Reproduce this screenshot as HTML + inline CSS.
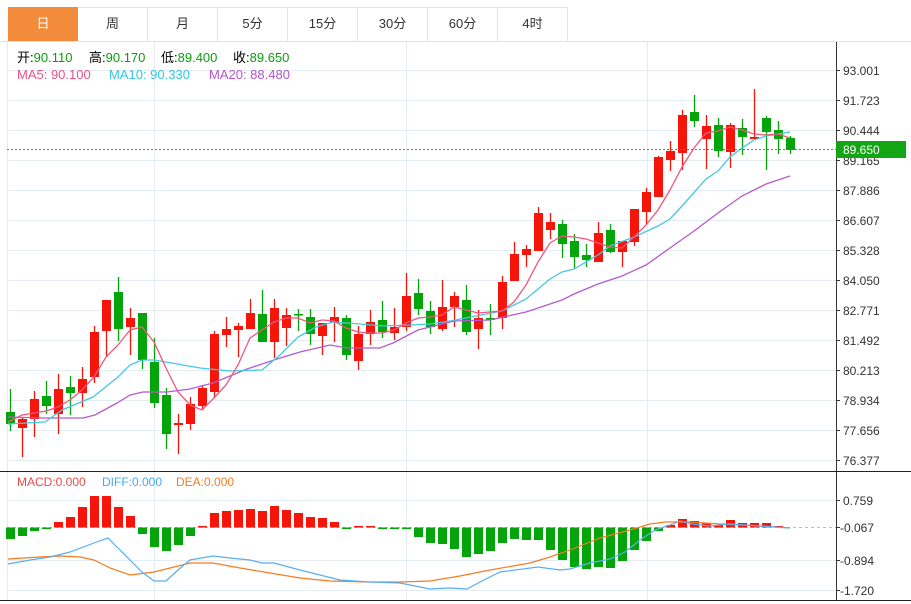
<!DOCTYPE html>
<html><head><meta charset="utf-8"><style>
html,body{margin:0;padding:0;background:#fff;width:911px;height:604px;overflow:hidden;font-family:"Liberation Sans","Noto Sans CJK SC",sans-serif;}
.tabs{position:absolute;left:8px;top:7px;height:34px;display:flex;}
.tab{width:70px;height:34px;line-height:34px;text-align:center;font-size:13px;color:#333;border-right:1px solid #e3e3e3;box-sizing:border-box;}
.tab.on{background:#f28c3c;color:#fff;border-right:none}
</style></head><body>
<svg width="911" height="604" style="position:absolute;left:0;top:0" font-family="Liberation Sans, Noto Sans CJK SC, sans-serif">
<line x1="0" y1="41.5" x2="911" y2="41.5" stroke="#e3e3e3"/>
<line x1="8" y1="7.5" x2="567" y2="7.5" stroke="#e3e3e3"/>
<g stroke="#e4ecf3" stroke-width="1">
<line x1="7" y1="70.5" x2="836" y2="70.5"/><line x1="7" y1="100.5" x2="836" y2="100.5"/><line x1="7" y1="130.5" x2="836" y2="130.5"/><line x1="7" y1="160.5" x2="836" y2="160.5"/><line x1="7" y1="190.5" x2="836" y2="190.5"/><line x1="7" y1="220.5" x2="836" y2="220.5"/><line x1="7" y1="250.5" x2="836" y2="250.5"/><line x1="7" y1="280.5" x2="836" y2="280.5"/><line x1="7" y1="310.5" x2="836" y2="310.5"/><line x1="7" y1="340.5" x2="836" y2="340.5"/><line x1="7" y1="370.5" x2="836" y2="370.5"/><line x1="7" y1="400.5" x2="836" y2="400.5"/><line x1="7" y1="430.5" x2="836" y2="430.5"/><line x1="7" y1="460.5" x2="836" y2="460.5"/>
<line x1="7.5" y1="42" x2="7.5" y2="600"/><line x1="154.5" y1="42" x2="154.5" y2="600"/><line x1="406.5" y1="42" x2="406.5" y2="600"/><line x1="647.5" y1="42" x2="647.5" y2="600"/>
<line x1="7" y1="500.5" x2="836" y2="500.5"/><line x1="7" y1="560.5" x2="836" y2="560.5"/><line x1="7" y1="590.5" x2="836" y2="590.5"/>
</g>
<line x1="7" y1="527.5" x2="836" y2="527.5" stroke="#9cc7e6" stroke-dasharray="3,3"/>
<g fill="#000" font-size="13">
<text x="17" y="62">开:<tspan fill="#0a9e0a">90.110</tspan></text>
<text x="89" y="62">高:<tspan fill="#0a9e0a">90.170</tspan></text>
<text x="161" y="62">低:<tspan fill="#0a9e0a">89.400</tspan></text>
<text x="233" y="62">收:<tspan fill="#0a9e0a">89.650</tspan></text>
<text x="17" y="79" fill="#f0508a">MA5: 90.100</text>
<text x="109" y="79" fill="#35c6e0">MA10: 90.330</text>
<text x="209" y="79" fill="#b456cc">MA20: 88.480</text>
</g>
<g font-size="12">
<text x="17" y="486" fill="#f04848">MACD:0.000</text>
<text x="102" y="486" fill="#4aa8f0">DIFF:0.000</text>
<text x="176" y="486" fill="#f57c22">DEA:0.000</text>
</g>
<!-- candles wicks -->
<g stroke="#f5150a" stroke-width="1.3">
<line x1="22.5" y1="417" x2="22.5" y2="457"/><line x1="34.5" y1="391" x2="34.5" y2="437"/><line x1="58.5" y1="374" x2="58.5" y2="434"/><line x1="82.5" y1="367" x2="82.5" y2="407"/><line x1="94.5" y1="326" x2="94.5" y2="383"/><line x1="106.5" y1="300" x2="106.5" y2="357"/><line x1="130.5" y1="308" x2="130.5" y2="355"/><line x1="178.5" y1="414" x2="178.5" y2="454"/><line x1="190.5" y1="397" x2="190.5" y2="430"/><line x1="202.5" y1="385" x2="202.5" y2="410"/><line x1="214.5" y1="331" x2="214.5" y2="398"/><line x1="226.5" y1="317" x2="226.5" y2="347"/><line x1="238.5" y1="323" x2="238.5" y2="357"/><line x1="250.5" y1="299" x2="250.5" y2="329"/><line x1="274.5" y1="299" x2="274.5" y2="358"/><line x1="286.5" y1="308" x2="286.5" y2="346"/><line x1="322.5" y1="323" x2="322.5" y2="355"/><line x1="334.5" y1="307" x2="334.5" y2="342"/><line x1="358.5" y1="326" x2="358.5" y2="370"/><line x1="370.5" y1="310" x2="370.5" y2="345"/><line x1="394.5" y1="308" x2="394.5" y2="340"/><line x1="406.5" y1="273" x2="406.5" y2="331"/><line x1="442.5" y1="280" x2="442.5" y2="331"/><line x1="454.5" y1="292" x2="454.5" y2="327"/><line x1="478.5" y1="310" x2="478.5" y2="349"/><line x1="502.5" y1="276" x2="502.5" y2="329"/><line x1="514.5" y1="242" x2="514.5" y2="281"/><line x1="526.5" y1="245" x2="526.5" y2="267"/><line x1="538.5" y1="207" x2="538.5" y2="251"/><line x1="550.5" y1="213" x2="550.5" y2="239"/><line x1="598.5" y1="222" x2="598.5" y2="262"/><line x1="622.5" y1="241" x2="622.5" y2="267"/><line x1="634.5" y1="209" x2="634.5" y2="246"/><line x1="646.5" y1="188" x2="646.5" y2="224"/><line x1="658.5" y1="156" x2="658.5" y2="197"/><line x1="670.5" y1="141" x2="670.5" y2="171"/><line x1="682.5" y1="110" x2="682.5" y2="170"/><line x1="706.5" y1="115" x2="706.5" y2="169"/><line x1="730.5" y1="123" x2="730.5" y2="168"/><line x1="754.5" y1="89" x2="754.5" y2="139"/>
</g>
<g stroke="#f5150a" stroke-width="9">
<line x1="22.5" y1="419" x2="22.5" y2="428"/><line x1="34.5" y1="399" x2="34.5" y2="419"/><line x1="58.5" y1="389" x2="58.5" y2="414"/><line x1="82.5" y1="379" x2="82.5" y2="393"/><line x1="94.5" y1="332" x2="94.5" y2="377"/><line x1="106.5" y1="300" x2="106.5" y2="331"/><line x1="130.5" y1="318" x2="130.5" y2="327"/><line x1="178.5" y1="423" x2="178.5" y2="425"/><line x1="190.5" y1="404" x2="190.5" y2="424"/><line x1="202.5" y1="388" x2="202.5" y2="406"/><line x1="214.5" y1="334" x2="214.5" y2="392"/><line x1="226.5" y1="329" x2="226.5" y2="335"/><line x1="238.5" y1="326" x2="238.5" y2="330"/><line x1="250.5" y1="313" x2="250.5" y2="329"/><line x1="274.5" y1="308" x2="274.5" y2="342"/><line x1="286.5" y1="315" x2="286.5" y2="328"/><line x1="322.5" y1="323" x2="322.5" y2="336"/><line x1="334.5" y1="317" x2="334.5" y2="322"/><line x1="358.5" y1="334" x2="358.5" y2="361"/><line x1="370.5" y1="322" x2="370.5" y2="334"/><line x1="394.5" y1="327" x2="394.5" y2="333"/><line x1="406.5" y1="296" x2="406.5" y2="327"/><line x1="442.5" y1="307" x2="442.5" y2="329"/><line x1="454.5" y1="296" x2="454.5" y2="307"/><line x1="478.5" y1="318" x2="478.5" y2="329"/><line x1="502.5" y1="282" x2="502.5" y2="318"/><line x1="514.5" y1="254" x2="514.5" y2="281"/><line x1="526.5" y1="249" x2="526.5" y2="255"/><line x1="538.5" y1="213" x2="538.5" y2="251"/><line x1="550.5" y1="222" x2="550.5" y2="230"/><line x1="598.5" y1="233" x2="598.5" y2="262"/><line x1="622.5" y1="241" x2="622.5" y2="252"/><line x1="634.5" y1="209" x2="634.5" y2="242"/><line x1="646.5" y1="192" x2="646.5" y2="212"/><line x1="658.5" y1="157" x2="658.5" y2="197"/><line x1="670.5" y1="151" x2="670.5" y2="160"/><line x1="682.5" y1="115" x2="682.5" y2="153"/><line x1="706.5" y1="126" x2="706.5" y2="139"/><line x1="730.5" y1="125" x2="730.5" y2="152"/><line x1="754.5" y1="137" x2="754.5" y2="139"/>
</g>
<g stroke="#04a50b" stroke-width="1.3">
<line x1="10.5" y1="389" x2="10.5" y2="431"/><line x1="46.5" y1="381" x2="46.5" y2="414"/><line x1="70.5" y1="376" x2="70.5" y2="415"/><line x1="118.5" y1="277" x2="118.5" y2="341"/><line x1="142.5" y1="313" x2="142.5" y2="369"/><line x1="154.5" y1="338" x2="154.5" y2="408"/><line x1="166.5" y1="388" x2="166.5" y2="449"/><line x1="262.5" y1="290" x2="262.5" y2="342"/><line x1="298.5" y1="309" x2="298.5" y2="331"/><line x1="310.5" y1="309" x2="310.5" y2="345"/><line x1="346.5" y1="315" x2="346.5" y2="360"/><line x1="382.5" y1="301" x2="382.5" y2="338"/><line x1="418.5" y1="279" x2="418.5" y2="315"/><line x1="430.5" y1="301" x2="430.5" y2="334"/><line x1="466.5" y1="285" x2="466.5" y2="335"/><line x1="490.5" y1="304" x2="490.5" y2="335"/><line x1="562.5" y1="220" x2="562.5" y2="258"/><line x1="574.5" y1="234" x2="574.5" y2="268"/><line x1="586.5" y1="244" x2="586.5" y2="267"/><line x1="610.5" y1="224" x2="610.5" y2="253"/><line x1="694.5" y1="95" x2="694.5" y2="127"/><line x1="718.5" y1="118" x2="718.5" y2="157"/><line x1="742.5" y1="119" x2="742.5" y2="155"/><line x1="766.5" y1="116" x2="766.5" y2="170"/><line x1="778.5" y1="121" x2="778.5" y2="154"/><line x1="790.5" y1="136" x2="790.5" y2="154"/>
</g>
<g stroke="#04a50b" stroke-width="9">
<line x1="10.5" y1="412" x2="10.5" y2="424"/><line x1="46.5" y1="396" x2="46.5" y2="406"/><line x1="70.5" y1="387" x2="70.5" y2="393"/><line x1="118.5" y1="292" x2="118.5" y2="329"/><line x1="142.5" y1="313" x2="142.5" y2="360"/><line x1="154.5" y1="362" x2="154.5" y2="403"/><line x1="166.5" y1="395" x2="166.5" y2="434"/><line x1="262.5" y1="314" x2="262.5" y2="342"/><line x1="298.5" y1="314" x2="298.5" y2="315.5"/><line x1="310.5" y1="317" x2="310.5" y2="334"/><line x1="346.5" y1="318" x2="346.5" y2="355"/><line x1="382.5" y1="320" x2="382.5" y2="332"/><line x1="418.5" y1="293" x2="418.5" y2="309"/><line x1="430.5" y1="311" x2="430.5" y2="327"/><line x1="466.5" y1="300" x2="466.5" y2="332"/><line x1="490.5" y1="318" x2="490.5" y2="320"/><line x1="562.5" y1="224" x2="562.5" y2="244"/><line x1="574.5" y1="241" x2="574.5" y2="257"/><line x1="586.5" y1="255" x2="586.5" y2="260"/><line x1="610.5" y1="230" x2="610.5" y2="252"/><line x1="694.5" y1="112" x2="694.5" y2="121"/><line x1="718.5" y1="125" x2="718.5" y2="151"/><line x1="742.5" y1="128" x2="742.5" y2="137"/><line x1="766.5" y1="118" x2="766.5" y2="132"/><line x1="778.5" y1="130" x2="778.5" y2="139"/><line x1="790.5" y1="138" x2="790.5" y2="150"/>
</g>
<!-- MAs -->
<g fill="none" stroke-width="1.3">
<polyline stroke="#b35bd0" points="8,417 43,418 83,418 95,415 117,403 130,395 143,392 167,392 190,389 213,383 247,369 277,359 300,352 330,345 347,348 380,348 393,343 418,330 454,321 490,320 526,312 562,300 574,294 598,284 622,276 646,265 670,248 694,231 718,213 742,196 766,184 790,176"/>
<polyline stroke="#45c8e2" points="8,424 45,422 62,410 93,397 118,377 130,365 142,360 154,360 166,362 200,368 230,371 262,370 280,355 298,337 316,327 333,322 360,324 383,326 410,325 430,324 450,321 502,311 526,299 550,279 562,272 574,269 598,255 610,246 634,237 658,226 670,219 682,206 706,179 718,171 730,157 742,148 754,140 766,136 790,132"/>
<polyline stroke="#f0567e" points="8,422 22,415 46,411 58,407 70,400 82,390 94,377 106,357 118,345 130,330 142,327 154,342 166,368 178,392 190,405 202,410 214,398 226,385 238,365 250,338 262,330 274,322 286,318 298,318 310,323 322,320 334,321 346,328 358,332 370,333 382,333 394,330 406,323 418,318 430,317 442,315 454,307 466,310 478,313 490,312 502,311 514,302 526,285 538,262 550,243 562,236 574,237 586,239 598,243 610,247 622,248 634,237 646,225 658,210 670,190 682,167 694,148 706,133 718,131 730,127 742,130 754,134 766,135 778,134 790,138"/>
</g>
<!-- MACD bars -->
<g stroke="#04a50b" stroke-width="9">
<line x1="10.5" y1="527.5" x2="10.5" y2="539"/><line x1="22.5" y1="527.5" x2="22.5" y2="536"/><line x1="34.5" y1="527.5" x2="34.5" y2="531"/><line x1="46.5" y1="527.5" x2="46.5" y2="529"/><line x1="142.5" y1="527.5" x2="142.5" y2="534"/><line x1="154.5" y1="527.5" x2="154.5" y2="547"/><line x1="166.5" y1="527.5" x2="166.5" y2="551"/><line x1="178.5" y1="527.5" x2="178.5" y2="545"/><line x1="190.5" y1="527.5" x2="190.5" y2="536"/><line x1="346.5" y1="527.5" x2="346.5" y2="529"/><line x1="382.5" y1="527.5" x2="382.5" y2="529"/><line x1="394.5" y1="527.5" x2="394.5" y2="529"/><line x1="406.5" y1="527.5" x2="406.5" y2="529"/><line x1="418.5" y1="527.5" x2="418.5" y2="537"/><line x1="430.5" y1="527.5" x2="430.5" y2="543"/><line x1="442.5" y1="527.5" x2="442.5" y2="544"/><line x1="454.5" y1="527.5" x2="454.5" y2="549"/><line x1="466.5" y1="527.5" x2="466.5" y2="557"/><line x1="478.5" y1="527.5" x2="478.5" y2="554"/><line x1="490.5" y1="527.5" x2="490.5" y2="551"/><line x1="502.5" y1="527.5" x2="502.5" y2="543"/><line x1="514.5" y1="527.5" x2="514.5" y2="539"/><line x1="526.5" y1="527.5" x2="526.5" y2="540"/><line x1="538.5" y1="527.5" x2="538.5" y2="540"/><line x1="550.5" y1="527.5" x2="550.5" y2="550"/><line x1="562.5" y1="527.5" x2="562.5" y2="560"/><line x1="574.5" y1="527.5" x2="574.5" y2="567"/><line x1="586.5" y1="527.5" x2="586.5" y2="569"/><line x1="598.5" y1="527.5" x2="598.5" y2="567"/><line x1="610.5" y1="527.5" x2="610.5" y2="568"/><line x1="622.5" y1="527.5" x2="622.5" y2="561"/><line x1="634.5" y1="527.5" x2="634.5" y2="550"/><line x1="646.5" y1="527.5" x2="646.5" y2="541"/><line x1="658.5" y1="527.5" x2="658.5" y2="531"/>
</g>
<g stroke="#f5150a" stroke-width="9">
<line x1="58.5" y1="527.5" x2="58.5" y2="522"/><line x1="70.5" y1="527.5" x2="70.5" y2="517"/><line x1="82.5" y1="527.5" x2="82.5" y2="507"/><line x1="94.5" y1="527.5" x2="94.5" y2="496"/><line x1="106.5" y1="527.5" x2="106.5" y2="496"/><line x1="118.5" y1="527.5" x2="118.5" y2="507"/><line x1="130.5" y1="527.5" x2="130.5" y2="516"/><line x1="202.5" y1="527.5" x2="202.5" y2="526"/><line x1="214.5" y1="527.5" x2="214.5" y2="513"/><line x1="226.5" y1="527.5" x2="226.5" y2="511"/><line x1="238.5" y1="527.5" x2="238.5" y2="510"/><line x1="250.5" y1="527.5" x2="250.5" y2="509"/><line x1="262.5" y1="527.5" x2="262.5" y2="511"/><line x1="274.5" y1="527.5" x2="274.5" y2="506"/><line x1="286.5" y1="527.5" x2="286.5" y2="510"/><line x1="298.5" y1="527.5" x2="298.5" y2="513"/><line x1="310.5" y1="527.5" x2="310.5" y2="517"/><line x1="322.5" y1="527.5" x2="322.5" y2="518"/><line x1="334.5" y1="527.5" x2="334.5" y2="522"/><line x1="358.5" y1="527.5" x2="358.5" y2="526"/><line x1="370.5" y1="527.5" x2="370.5" y2="526"/><line x1="670.5" y1="527.5" x2="670.5" y2="525"/><line x1="682.5" y1="527.5" x2="682.5" y2="519"/><line x1="694.5" y1="527.5" x2="694.5" y2="521"/><line x1="706.5" y1="527.5" x2="706.5" y2="523"/><line x1="718.5" y1="527.5" x2="718.5" y2="525"/><line x1="730.5" y1="527.5" x2="730.5" y2="520"/><line x1="742.5" y1="527.5" x2="742.5" y2="523"/><line x1="754.5" y1="527.5" x2="754.5" y2="523"/><line x1="766.5" y1="527.5" x2="766.5" y2="523"/><line x1="778.5" y1="527.5" x2="778.5" y2="526"/>
</g>
<g fill="none" stroke-width="1.2">
<polyline stroke="#f57c22" points="8,559 40,557 60,556 80,557 94,560 110,568 130,575 154,572 170,568 190,563 213,563 240,568 270,573 300,578 330,581 370,582 400,582 430,581 460,576 490,570 530,563 550,557 570,550 600,538 630,530 650,524 665,522 690,522 720,524 760,526 790,528"/>
<polyline stroke="#5aaef0" points="8,564 30,560 50,557 70,552 94,543 108,538 118,548 130,560 142,572 154,581 166,581 178,570 190,560 213,556 230,558 250,560 262,563 274,563 300,570 320,575 340,580 370,582 400,583 430,589 450,588 467,589 480,582 500,572 538,567 560,570 570,569 590,563 610,559 625,552 640,540 655,530 670,525 680,521 692,524 710,526 730,524 760,526 790,528"/>
</g>
<!-- price line -->
<line x1="7" y1="149.5" x2="836" y2="149.5" stroke="#3a9a3a" stroke-dasharray="2,2"/>
<!-- axes -->
<line x1="836.5" y1="42" x2="836.5" y2="600" stroke="#333"/>
<line x1="0" y1="471.5" x2="911" y2="471.5" stroke="#222"/>
<line x1="0" y1="600.5" x2="911" y2="600.5" stroke="#222"/>
<g stroke="#333">
<line x1="836" y1="70.5" x2="840" y2="70.5"/><line x1="836" y1="100.5" x2="840" y2="100.5"/><line x1="836" y1="130.5" x2="840" y2="130.5"/><line x1="836" y1="160.5" x2="840" y2="160.5"/><line x1="836" y1="190.5" x2="840" y2="190.5"/><line x1="836" y1="220.5" x2="840" y2="220.5"/><line x1="836" y1="250.5" x2="840" y2="250.5"/><line x1="836" y1="280.5" x2="840" y2="280.5"/><line x1="836" y1="310.5" x2="840" y2="310.5"/><line x1="836" y1="340.5" x2="840" y2="340.5"/><line x1="836" y1="370.5" x2="840" y2="370.5"/><line x1="836" y1="400.5" x2="840" y2="400.5"/><line x1="836" y1="430.5" x2="840" y2="430.5"/><line x1="836" y1="460.5" x2="840" y2="460.5"/>
<line x1="836" y1="500.5" x2="840" y2="500.5"/><line x1="836" y1="527.5" x2="840" y2="527.5"/><line x1="836" y1="560.5" x2="840" y2="560.5"/><line x1="836" y1="590.5" x2="840" y2="590.5"/>
</g>
<g font-size="12" fill="#333">
<text x="843" y="75">93.001</text><text x="843" y="105">91.723</text><text x="843" y="135">90.444</text><text x="843" y="165">89.165</text><text x="843" y="195">87.886</text><text x="843" y="225">86.607</text><text x="843" y="255">85.328</text><text x="843" y="285">84.050</text><text x="843" y="315">82.771</text><text x="843" y="345">81.492</text><text x="843" y="375">80.213</text><text x="843" y="405">78.934</text><text x="843" y="435">77.656</text><text x="843" y="465">76.377</text>
<text x="843" y="505">0.759</text><text x="840" y="532">-0.067</text><text x="840" y="565">-0.894</text><text x="840" y="595">-1.720</text>
</g>
<rect x="836" y="141" width="70" height="17" fill="#14a514"/>
<text x="843" y="154" font-size="12" fill="#fff">89.650</text>
</svg>
<div class="tabs"><div class="tab on">日</div><div class="tab">周</div><div class="tab">月</div><div class="tab">5分</div><div class="tab">15分</div><div class="tab">30分</div><div class="tab">60分</div><div class="tab">4时</div></div>
</body></html>
